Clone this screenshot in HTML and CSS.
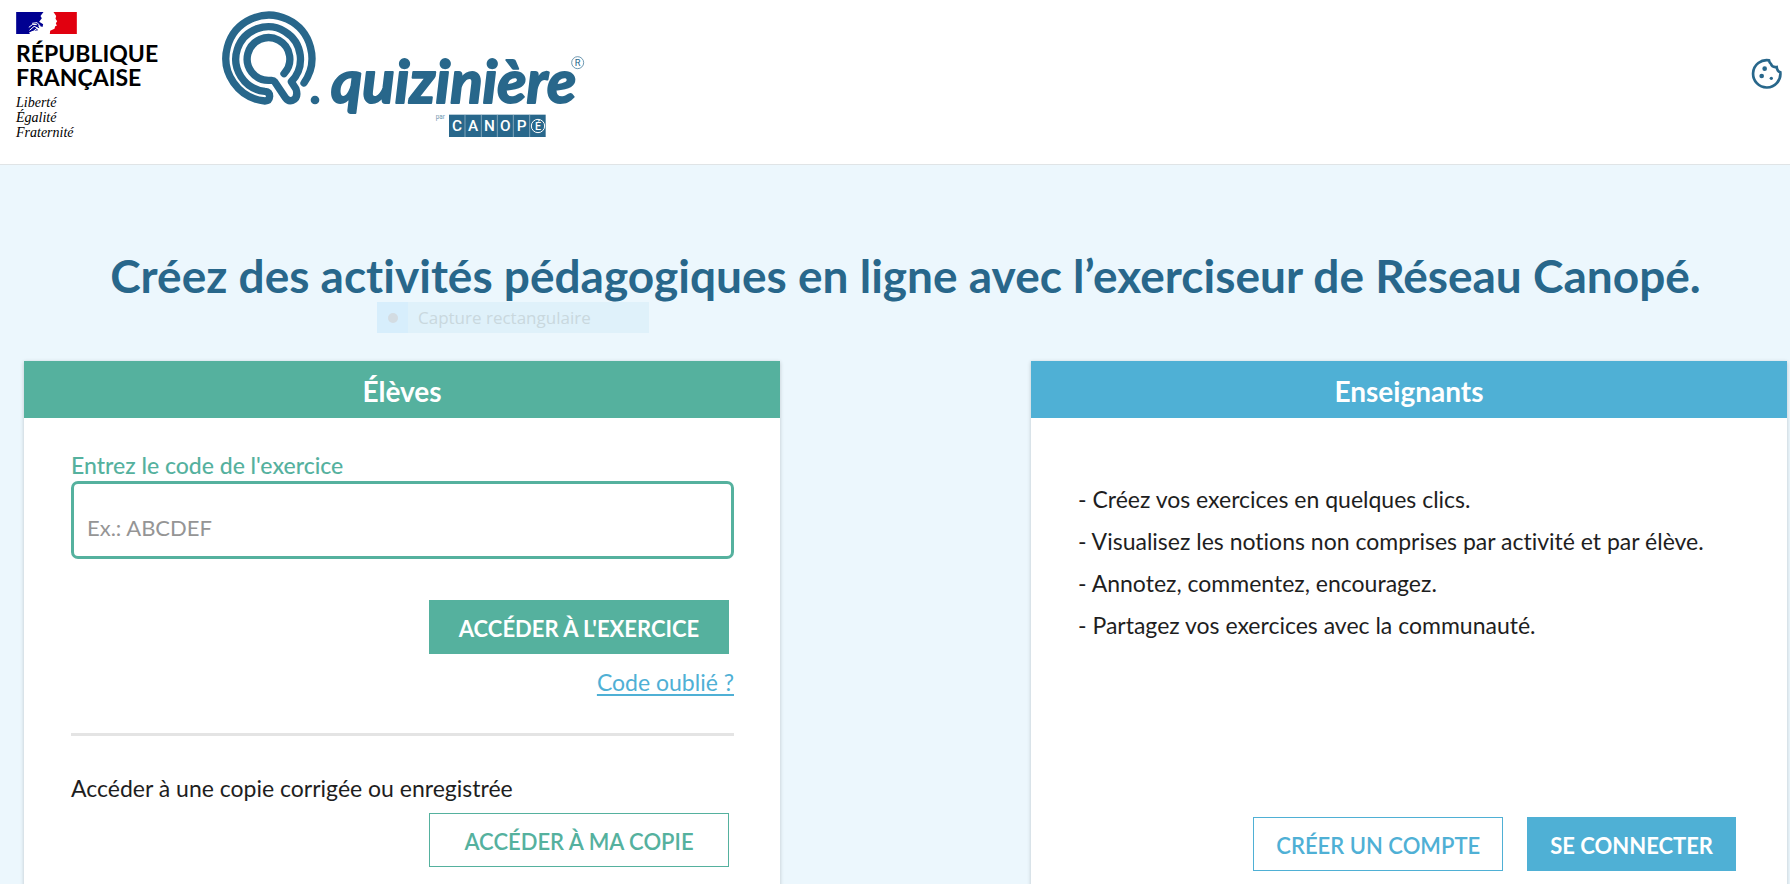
FILE: index.html
```html
<!DOCTYPE html>
<html lang="fr">
<head>
<meta charset="utf-8">
<meta name="viewport" content="width=device-width, initial-scale=1">
<title>Quizinière</title>
<link rel="stylesheet" href="styles.css">
</head>
<body>
<header class="site-header">
  <div class="gov">
    <svg class="flag" viewBox="0 0 182 66" aria-hidden="true">
      <rect width="182" height="66" fill="#fff"/>
      <path d="M0 0H82L73 12L77 19L69 29L81 37L79 45L65 40L70 49L58 46L66 55L48 57L38 62L42 66H0Z" fill="#000091"/>
      <path d="M112 0H182V66H101L102 56L115 50L117 43L122 41L119 34L123 28L118 20L120 12Z" fill="#e1000f"/>
      <path d="M38 46L50 37L62 38M40 55L54 43L68 50M48 34L63 32L72 42M52 57L62 50" fill="none" stroke="#fff" stroke-width="3"/>
    </svg>
    <p class="gov-name">RÉPUBLIQUE<br>FRANÇAISE</p>
    <p class="gov-motto">Liberté<br>Égalité<br>Fraternité</p>
  </div>
  <a class="brand" href="#" aria-label="Quizinière par Canopé">
    <svg class="brand-logo" viewBox="30 30 1095 384">
      <path class="logo-line" d="M282 249A129 129 0 1 0 165 303Q178 303 179 289Q179 275 165 274A97 97 0 1 1 244 245L258 267Q266 292 248 301Q235 306 226 293L194 245Q191 241 185 241H176A64 64 0 1 1 222 221"/>
      <circle class="logo-fill" cx="315" cy="300" r="13"/>
      <text class="wordmark" x="363" y="310">quizinière</text>
      <circle class="logo-thin" cx="1103" cy="188" r="18"/>
      <text class="logo-mark" x="1103" y="198">R</text>
      <text class="logo-by" x="677" y="357">par</text>
      <rect class="logo-fill" x="717" y="344" width="290" height="67"/>
      <path class="logo-split" d="M765 344V411M814 344V411M862 344V411M910 344V411M959 344V411"/>
      <g class="logo-tiles">
        <text x="741" y="394">C</text><text x="789" y="394">A</text><text x="838" y="394">N</text><text x="886" y="394">O</text><text x="935" y="394">P</text>
        <text class="small" x="984" y="389">É</text>
      </g>
      <circle class="logo-ring" cx="984" cy="378" r="20"/>
    </svg>
  </a>
  <button class="cookie" type="button" aria-label="Gérer les cookies">
    <svg viewBox="0 0 96 96" aria-hidden="true">
      <path d="M54 7A41 41 0 1 0 88 43Q78 40 77 27Q63 29 60 18Q55 14 54 7Z" fill="none" stroke="#28678b" stroke-width="8"/>
      <circle cx="41" cy="32" r="7"/><circle cx="32" cy="54" r="7"/><circle cx="61" cy="61" r="5"/>
    </svg>
  </button>
</header>
<main class="home">
  <h1 class="title">Créez des activités pédagogiques en ligne avec l’exerciseur de Réseau Canopé.</h1>
  <div class="snip"><span class="snip-icon"></span><span class="snip-text">Capture rectangulaire</span></div>
  <div class="cards">
    <section class="card card-green">
      <h2 class="card-title">Élèves</h2>
      <form class="card-body">
        <label class="code-label" for="code">Entrez le code de l'exercice</label>
        <input class="code-input" id="code" type="text" placeholder="Ex.: ABCDEF">
        <button class="btn btn-fill btn-wide" type="button">ACCÉDER À L'EXERCICE</button>
        <a class="forgot" href="#">Code oublié ?</a>
        <hr class="rule">
        <p class="copy-text">Accéder à une copie corrigée ou enregistrée</p>
        <button class="btn btn-line btn-wide" type="button">ACCÉDER À MA COPIE</button>
      </form>
    </section>
    <section class="card card-blue">
      <h2 class="card-title">Enseignants</h2>
      <div class="card-body">
        <ul class="points">
          <li>- Créez vos exercices en quelques clics.</li>
          <li>- Visualisez les notions non comprises par activité et par élève.</li>
          <li>- Annotez, commentez, encouragez.</li>
          <li>- Partagez vos exercices avec la communauté.</li>
        </ul>
        <div class="actions">
          <button class="btn btn-line" type="button">CRÉER UN COMPTE</button>
          <button class="btn btn-fill" type="button">SE CONNECTER</button>
        </div>
      </div>
    </section>
  </div>
</main>
</body>
</html>
```
FILE: styles.css
```css
* { box-sizing: border-box; }
html { background: #ecf7fd; }
body {
  margin: 0;
  font-family: Lato, "Open Sans", sans-serif;
  font-size: 23px;
  line-height: 28px;
  font-variant-ligatures: none;
  color: #1e1e1e;
  overflow-x: hidden;
}
h1, h2, p, ul { margin: 0; padding: 0; }
button, input { font: inherit; }

.site-header {
  display: flex;
  align-items: flex-start;
  height: 165px;
  padding: 10px 7px 0 16px;
  background: #fff;
  border-bottom: 1px solid #e0e4e6;
}
.gov { width: 204px; padding-top: 2px; color: #000; }
.flag { display: block; width: 61px; height: 22px; }
.gov-name { padding-top: 7px; font-size: 23px; line-height: 24px; font-weight: 700; }
.gov-motto {
  padding-top: 6px;
  font-family: "Liberation Serif", serif;
  font-size: 14px;
  line-height: 15px;
  font-style: italic;
}
.brand-logo { display: block; width: 365px; height: 128px; }
.logo-line { fill: none; stroke: #28678b; stroke-width: 22; stroke-linecap: round; stroke-linejoin: round; }
.logo-fill { fill: #28678b; }
.logo-thin { fill: none; stroke: #28678b; stroke-width: 2; }
.logo-ring { fill: none; stroke: #fff; stroke-width: 3; }
.logo-split { stroke: #a9c2d1; stroke-width: 2; }
.wordmark {
  font-family: Lato, sans-serif;
  font-size: 180px;
  font-weight: 700;
  font-style: italic;
  fill: #28678b;
  stroke: #28678b;
  stroke-width: 6;
  stroke-linejoin: round;
}
.logo-mark { font-family: Roboto, sans-serif; font-size: 28px; text-anchor: middle; fill: #28678b; }
.logo-by { font-family: Roboto, sans-serif; font-size: 19px; fill: #6d97b0; }
.logo-tiles text { font-family: Roboto, sans-serif; font-size: 46px; font-weight: 500; text-anchor: middle; fill: #fff; }
.logo-tiles .small { font-size: 32px; }
.cookie {
  width: 32px;
  height: 32px;
  margin: 48px 0 0 auto;
  padding: 0;
  border: 0;
  background: none;
}
.cookie svg { display: block; width: 32px; height: 32px; fill: #28678b; }

.home { position: relative; padding: 83px 3px 0 24px; }
.title {
  font-size: 46px;
  line-height: 56px;
  font-weight: 700;
  text-align: center;
  color: #28678b;
  white-space: nowrap;
}
.snip {
  position: absolute;
  top: 137px;
  left: 377px;
  display: flex;
  align-items: center;
  width: 272px;
  height: 31px;
  background: #dff1fa;
}
.snip-icon { display: flex; align-items: center; justify-content: center; width: 31px; height: 31px; background: #d7eefc; }
.snip-icon::before { content: ""; width: 10px; height: 10px; border-radius: 50%; background: #d3dce2; }
.snip-text { padding-left: 10px; font-family: "Open Sans", sans-serif; font-size: 17px; color: #c9d8de; }

.cards { display: grid; grid-template-columns: 1fr 1fr; column-gap: 251px; padding-top: 57px; }
.card {
  display: flex;
  flex-direction: column;
  min-height: 560px;
  background: #fff;
  box-shadow: 0 1px 4px rgba(0, 0, 0, .2);
}
.card-green { --accent: #55b19e; }
.card-blue { --accent: #4fb0d5; }
.card-title {
  padding: 14px 0 11px;
  font-size: 28px;
  line-height: 32px;
  font-weight: 700;
  text-align: center;
  color: #fff;
  background: var(--accent);
}
.card-body { display: flex; flex-direction: column; align-items: flex-end; padding: 33px 46px 40px 47px; }
.code-label { align-self: flex-start; margin-bottom: 2px; font-weight: 500; color: var(--accent); }
.code-input {
  width: 100%;
  height: 78px;
  padding: 14px 13px 0;
  border: 3px solid var(--accent);
  border-radius: 7px;
  background: #fff;
  font-size: 22px;
  outline: 0;
}
.code-input::placeholder { color: #959595; opacity: 1; }
.btn { height: 54px; padding: 4px 22px 0; border: 1px solid var(--accent); font-size: 22px; font-weight: 600; white-space: nowrap; }
.btn-fill { color: #fff; background: var(--accent); font-weight: 700; }
.btn-line { color: var(--accent); background: #fff; }
.btn-wide { width: 300px; margin-right: 5px; }
.code-input + .btn { margin-top: 41px; }
.forgot { margin-top: 14px; color: #4fb0d5; text-underline-offset: 3px; text-decoration-thickness: 2px; }
.rule { width: 100%; margin: 37px 0 38px; border: 0; border-top: 3px solid #e4e4e4; }
.copy-text { align-self: flex-start; margin-bottom: 11px; }
.points { width: 100%; padding-top: 27px; list-style: none; line-height: 42px; }
.actions { display: flex; gap: 24px; padding: 171px 5px 0 0; }
```
